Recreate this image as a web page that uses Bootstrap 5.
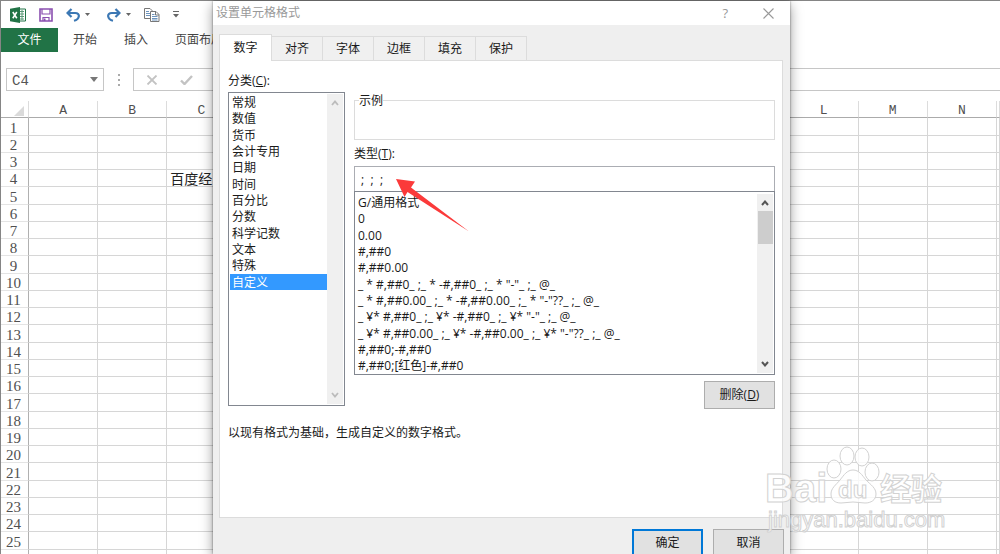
<!DOCTYPE html>
<html lang="zh-CN">
<head>
<meta charset="utf-8">
<meta name="viewport" content="width=device-width, initial-scale=1">
<title>设置单元格格式</title>
<link href="https://cdn.jsdelivr.net/npm/bootstrap@5.3.0/dist/css/bootstrap.min.css" rel="stylesheet">
<style>
  body { font-family: "Open Sans", "Noto Sans CJK SC", sans-serif; font-size: 12px; line-height: 16px; color: #1a1a1a; background: #fff; }
  button, select, input { font: inherit; color: inherit; }
  svg { display: block; }
  .excel-app { border-top: 1px solid #858585; border-left: 1px solid #858585; height: 100vh; }
  .plain-btn { border: 0; background: none; padding: 0; }

  .quick-bar { height: 27px; padding-left: 9px; gap: 13px; }
  .quick-bar .redo, .quick-bar .undo { gap: 5px; }
  .ribbon-tabs { height: 24px; gap: 27px; color: #444; }
  .ribbon-tabs a { color: inherit; text-decoration: none; white-space: nowrap; }
  .ribbon-tabs .file-tab { width: 57px; height: 24px; background: #217346; color: #fff; margin-right: -12px; }

  .formula-row { height: 23px; margin-top: 16px; padding-left: 5px; }
  .name-box { width: 98px; border: 1px solid #c6c6c6; }
  .name-box select { appearance: none; border: 0; background: none; width: 100%; height: 21px; padding: 2px 5px 0; font-family: "Liberation Mono", monospace; font-size: 14px; color: #555; }
  .name-box svg { right: 5px; top: 8px; pointer-events: none; }
  .formula-dots { width: 29px; }
  .formula-box { border: 1px solid #c6c6c6; border-right: 0; padding-left: 12px; gap: 22px; }
  .formula-box input { border: 0; outline: 0; min-width: 0; background: none; }

  .sheet { table-layout: fixed; width: 100%; margin-top: 10px; border-collapse: separate; border-spacing: 0; }
  .sheet th, .sheet td { padding: 0; font-weight: 400; line-height: 16px; height: 17px; border-right: 1px solid #d6d6d6; border-bottom: 1px solid #d6d6d6; white-space: nowrap; }
  .sheet th { text-align: center; font-family: "Liberation Mono", monospace; color: #505050; }
  .sheet tbody th { border-right-color: #b0b0b0; border-bottom-color: #e4e4e4; padding: 2px 2px 0 0; line-height: 14px; font-family: "Liberation Serif", serif; font-size: 15px; }
  .sheet tbody tr:nth-child(4n+1) > * { height: 18px; }
  .sheet thead th { border-bottom-color: #ababab; font-size: 13px; padding-top: 3px; line-height: 13px; border-right-color: #dcdcdc; }
  .sheet tbody td { font-size: 14px; color: #222; padding: 2px 0 0 3px; line-height: 14px; }
  .col-rows { width: 28px; }
  .col-edge { width: 3px; }

  .format-dialog { position: absolute; top: 1px; bottom: 0; left: 213px; width: 577px; overflow: hidden; background: #efefef; }
  .dialog-shade { position: absolute; top: 1px; bottom: 0; left: 213px; width: 577px; box-shadow: 0 4px 12px rgba(0,0,0,.4), 0 0 2px rgba(0,0,0,.5); }
  .title-bar { height: 24px; background: #fff; padding: 0 16px 0 3px; color: #999; }
  .title-bar .help-btn { margin-right: 35px; font-size: 13px; }
  .tab-strip { padding: 9px 0 0 6px; }
  .tab-strip button { width: 51px; height: 24px; border: 1px solid #dcdcdc; border-left: 0; border-bottom: 0; background: #f0f0f0; padding: 0; }
  .tab-strip button.active { width: 53px; height: 27px; border-left: 1px solid #dcdcdc; background: #fff; margin-bottom: -1px; position: relative; }
  .tab-panel { margin: 0 7px 0 6px; border: 1px solid #dcdcdc; background: #fff; height: 458px; padding: 12px 7px 0 8px; }
  .panel-cols { gap: 9px; }
  .category-col { width: 117px; }
  .list-frame { border: 1px solid #828790; background: #fff; padding: 1px; }
  .list-frame ul { list-style: none; margin: 0; padding: 0; white-space: pre; }
  .list-frame li { height: 16px; line-height: 17px; padding-left: 2px; }
  .list-frame li:nth-child(3n+2) { height: 17px; }
  .list-frame li[aria-selected="true"] { background: #3399ff; color: #fff; }
  .category-list { height: 314px; margin-top: 3px; }
  .format-list { height: 184px; padding-top: 2px; }
  .scroll-rail { width: 16px; background: #f0f0f0; padding: 6px 0; }
  .scroll-thumb { width: 15px; height: 33px; background: #cdcdcd; margin: 5px 0 auto 0; }
  .sample-box { border: 1px solid #dcdcdc; height: 48px; margin-top: 19px; padding: 0 4px; }
  .sample-box legend { float: none; width: auto; margin: 0; padding: 1px 0 0; font-size: 12px; line-height: 15px; }
  .type-label { margin-top: 6px; }
  .type-input { height: 25px; border: 1px solid #abadb3; border-bottom: 0; margin-top: 4px; padding: 0 3px; outline: 0; white-space: pre; }
  .win-btn { width: 71px; height: 28px; border: 1px solid #adadad; background: #e1e1e1; padding: 0; border-radius: 0; }
  .win-btn.primary { border: 2px solid #0078d7; }
  .delete-btn { margin-top: 6px; }
  .panel-note { margin: 16px 0 0; }
  .dialog-foot { padding: 11px 6px 0 0; gap: 10px; }
  .pointer-arrow { position: absolute; left: 396px; top: 178px; pointer-events: none; }
  .site-mark { position: absolute; left: 760px; top: 440px; pointer-events: none; }
</style>
</head>
<body class="overflow-hidden">
<div class="excel-app overflow-hidden">
  <div class="quick-bar d-flex align-items-center">
    <svg width="16" height="16" viewBox="0 0 16 16" aria-label="Excel"><path d="M9 2h6.500v12H9z" fill="#fff" stroke="#217346"/><path d="M10 4.500h4M10 7h4M10 9.500h4M10 12h4M12 3v10" stroke="#5c9a78" stroke-width="1"/><path d="M0 1.800L10 0v16L0 14.200z" fill="#217346"/><path d="M2.800 5l4 6.200M6.800 5l-4 6.200" stroke="#fff" stroke-width="1.600"/></svg>
    <button class="plain-btn" aria-label="保存"><svg width="14" height="14" viewBox="0 0 14 14"><path d="M1 1h12v12H1z" fill="#fff" stroke="#8a4fb0" stroke-width="1.600"/><path d="M3 1v5h8V1M4 13V9.500h6V13" fill="none" stroke="#8a4fb0" stroke-width="1.200"/><path d="M5 10.500h1.500V13H5z" fill="#8a4fb0"/></svg></button>
    <button class="plain-btn undo d-flex align-items-center" aria-label="撤消"><svg width="14" height="14" viewBox="0 0 14 14"><path d="M2 5h7.200c5.400 0 4.600 6.200-1.200 7.800" fill="none" stroke="#3c78b4" stroke-width="2.200"/><path d="M5.500 1L1.500 5l4 4" fill="none" stroke="#3c78b4" stroke-width="2.200"/></svg><svg width="5" height="3" viewBox="0 0 5 3"><path d="M0 0h5L2.500 3z" fill="#666"/></svg></button>
    <button class="plain-btn redo d-flex align-items-center ms-1" aria-label="恢复"><svg width="14" height="14" viewBox="0 0 14 14"><path d="M12 5H4.800C-.6 5 .2 11.200 6 12.800" fill="none" stroke="#3c78b4" stroke-width="2.200"/><path d="M8.500 1l4 4-4 4" fill="none" stroke="#3c78b4" stroke-width="2.200"/></svg><svg width="5" height="3" viewBox="0 0 5 3"><path d="M0 0h5L2.500 3z" fill="#666"/></svg></button>
    <button class="plain-btn" aria-label="复制"><svg width="16" height="14" viewBox="0 0 16 14"><path d="M.5.500h5.500l2 2v8H.5z" fill="#fff" stroke="#777"/><path d="M2 3.500h3M2 5.500h4M2 7.500h4" stroke="#6d94bd"/><path d="M6.500 3.500h5.500l3 3v7H6.500z" fill="#fff" stroke="#777"/><path d="M11.500 3.500v3.500H15" fill="none" stroke="#777"/><path d="M8 6.500h2.500M8 8.500h5.500M8 10.500h5.500M8 12h5.500" stroke="#6d94bd"/></svg></button>
    <button class="plain-btn" aria-label="自定义快速访问工具栏"><svg width="6" height="7" viewBox="0 0 6 7"><path d="M0 .5h6" stroke="#666"/><path d="M0 3h6L3 6.500z" fill="#666"/></svg></button>
  </div>
  <nav class="ribbon-tabs d-flex align-items-center">
    <a href="#" class="file-tab d-flex align-items-center justify-content-center flex-shrink-0">文件</a>
    <a href="#">开始</a><a href="#">插入</a><a href="#">页面布局</a>
  </nav>
  <div class="formula-row d-flex">
    <div class="name-box position-relative"><select aria-label="名称框"><option>C4</option></select>
      <svg class="position-absolute" width="8" height="5" viewBox="0 0 8 5"><path d="M0 0h8L4 5z" fill="#777"/></svg></div>
    <div class="formula-dots d-flex align-items-center justify-content-center"><svg width="2" height="12" viewBox="0 0 2 12"><path d="M0 0h2v2H0zM0 5h2v2H0zM0 10h2v2H0z" fill="#aaa"/></svg></div>
    <div class="formula-box flex-grow-1 d-flex align-items-center">
      <button class="plain-btn" aria-label="取消"><svg width="12" height="10" viewBox="0 0 12 10"><path d="M1.500.500l9 9M10.500.500l-9 9" stroke="#c3c3c3" stroke-width="1.800"/></svg></button>
      <button class="plain-btn" aria-label="输入"><svg width="13" height="10" viewBox="0 0 13 10"><path d="M1 5.500L4.500 9 12 1" fill="none" stroke="#c3c3c3" stroke-width="2.400"/></svg></button>
      <input class="flex-grow-1" type="text" aria-label="编辑栏">
    </div>
  </div>
  <table class="sheet">
    <colgroup><col class="col-rows"><col span="14"><col class="col-edge"></colgroup>
    <thead><tr><th><svg class="ms-auto me-1" width="10" height="10" viewBox="0 0 10 10" aria-label="全选"><path d="M10 0v10H0z" fill="#dadada"/></svg></th><th>A</th><th>B</th><th>C</th><th></th><th></th><th></th><th></th><th></th><th></th><th></th><th></th><th>L</th><th>M</th><th>N</th><th></th></tr></thead>
    <tbody id="cells"></tbody>
  </table>
</div>

<div class="dialog-shade"></div>
<section class="format-dialog" role="dialog" aria-labelledby="dialogTitle">
  <div class="title-bar d-flex align-items-center">
    <span id="dialogTitle" class="me-auto">设置单元格格式</span>
    <button class="plain-btn help-btn" aria-label="帮助">?</button>
    <button class="plain-btn" aria-label="关闭"><svg width="11" height="11" viewBox="0 0 11 11"><path d="M.5.500l10 10M10.500.500l-10 10" stroke="#999" stroke-width="1.100"/></svg></button>
  </div>
  <div class="tab-strip d-flex align-items-end" role="tablist">
    <button class="active" role="tab" aria-selected="true">数字</button><button role="tab">对齐</button><button role="tab">字体</button><button role="tab">边框</button><button role="tab">填充</button><button role="tab">保护</button>
  </div>
  <div class="tab-panel" role="tabpanel">
    <div class="panel-cols d-flex">
      <div class="category-col flex-shrink-0">
        <div id="categoryLabel">分类(<u>C</u>):</div>
        <div class="list-frame category-list d-flex">
          <ul class="flex-grow-1" role="listbox" aria-labelledby="categoryLabel"><li role="option">常规</li><li role="option">数值</li><li role="option">货币</li><li role="option">会计专用</li><li role="option">日期</li><li role="option">时间</li><li role="option">百分比</li><li role="option">分数</li><li role="option">科学记数</li><li role="option">文本</li><li role="option">特殊</li><li role="option" aria-selected="true">自定义</li></ul>
          <div class="scroll-rail d-flex flex-column align-items-center justify-content-between">
            <svg width="8" height="6" viewBox="0 0 8 6"><path d="M1 5l3-3.500L7 5" fill="none" stroke="#bcbcbc" stroke-width="1.800"/></svg>
            <svg width="8" height="6" viewBox="0 0 8 6"><path d="M1 1l3 3.500L7 1" fill="none" stroke="#bcbcbc" stroke-width="1.800"/></svg>
          </div>
        </div>
      </div>
      <div class="flex-grow-1 d-flex flex-column">
        <fieldset class="sample-box"><legend>示例</legend></fieldset>
        <label class="type-label" for="typeCode">类型(<u>T</u>):</label>
        <input class="type-input" id="typeCode" type="text" value=" ;  ;  ;">
        <div class="list-frame format-list d-flex">
          <ul class="flex-grow-1" role="listbox" aria-label="类型"><li role="option">G/通用格式</li><li role="option">0</li><li role="option">0.00</li><li role="option">#,##0</li><li role="option">#,##0.00</li><li role="option">_ * #,##0_ ;_ * -#,##0_ ;_ * "-"_ ;_ @_ </li><li role="option">_ * #,##0.00_ ;_ * -#,##0.00_ ;_ * "-"??_ ;_ @_ </li><li role="option">_ ¥* #,##0_ ;_ ¥* -#,##0_ ;_ ¥* "-"_ ;_ @_ </li><li role="option">_ ¥* #,##0.00_ ;_ ¥* -#,##0.00_ ;_ ¥* "-"??_ ;_ @_ </li><li role="option">#,##0;-#,##0</li><li role="option">#,##0;[红色]-#,##0</li></ul>
          <div class="scroll-rail d-flex flex-column align-items-center">
            <svg width="8" height="6" viewBox="0 0 8 6"><path d="M1 5l3-3.500L7 5" fill="none" stroke="#555" stroke-width="2"/></svg>
            <div class="scroll-thumb"></div>
            <svg width="8" height="6" viewBox="0 0 8 6"><path d="M1 1l3 3.500L7 1" fill="none" stroke="#555" stroke-width="2"/></svg>
          </div>
        </div>
        <button class="win-btn delete-btn align-self-end">删除(<u>D</u>)</button>
      </div>
    </div>
    <p class="panel-note">以现有格式为基础，生成自定义的数字格式。</p>
  </div>
  <div class="dialog-foot d-flex justify-content-end">
    <button class="win-btn primary">确定</button>
    <button class="win-btn">取消</button>
  </div>
</section>

<svg class="pointer-arrow" width="74" height="56" viewBox="0 0 74 56"><path d="M0 1l19 2.500-4 6L73 53.500 11.500 14l-3 5z" fill="#fb3a3a"/></svg>

<svg class="site-mark" width="190" height="96" viewBox="0 0 190 96" font-family="'Liberation Sans','Noto Sans CJK SC',sans-serif" font-weight="700" fill="#fff" fill-opacity=".8" stroke="#d2d2d2" stroke-width="1">
  <ellipse cx="74" cy="29" rx="7" ry="9"/><ellipse cx="87" cy="16" rx="7" ry="9"/><ellipse cx="102" cy="17" rx="7" ry="9"/><ellipse cx="112" cy="32" rx="7" ry="9"/>
  <path d="M93 30c6 0 9 5 13 10 5 5 10 8 10 14s-5 9-11 9c-4 0-8-1-12-1s-8 1-12 1c-6 0-10-3-10-9 0-6 5-9 9-14s7-10 13-10z"/>
  <text x="5" y="62" font-size="40">Bai</text>
  <text x="78" y="58" font-size="24">du</text>
  <text x="120" y="60" font-size="31">经验</text>
  <text x="8" y="87" font-size="22" font-weight="400">jingyan.baidu.com</text>
</svg>

<script>
  // Fill the worksheet grid: a row heading and fifteen cells per row
  const body = document.getElementById('cells');
  const values = { '4:3': '百度经' };
  for (let r = 1; r <= 26; r++) {
    const row = body.insertRow();
    const head = document.createElement('th');
    head.textContent = r <= 25 ? r : '';
    row.append(head);
    for (let c = 1; c <= 15; c++) row.insertCell().textContent = values[r + ':' + c] || '';
  }
</script>
<script src="https://cdn.jsdelivr.net/npm/bootstrap@5.3.0/dist/js/bootstrap.bundle.min.js"></script>
</body>
</html>
